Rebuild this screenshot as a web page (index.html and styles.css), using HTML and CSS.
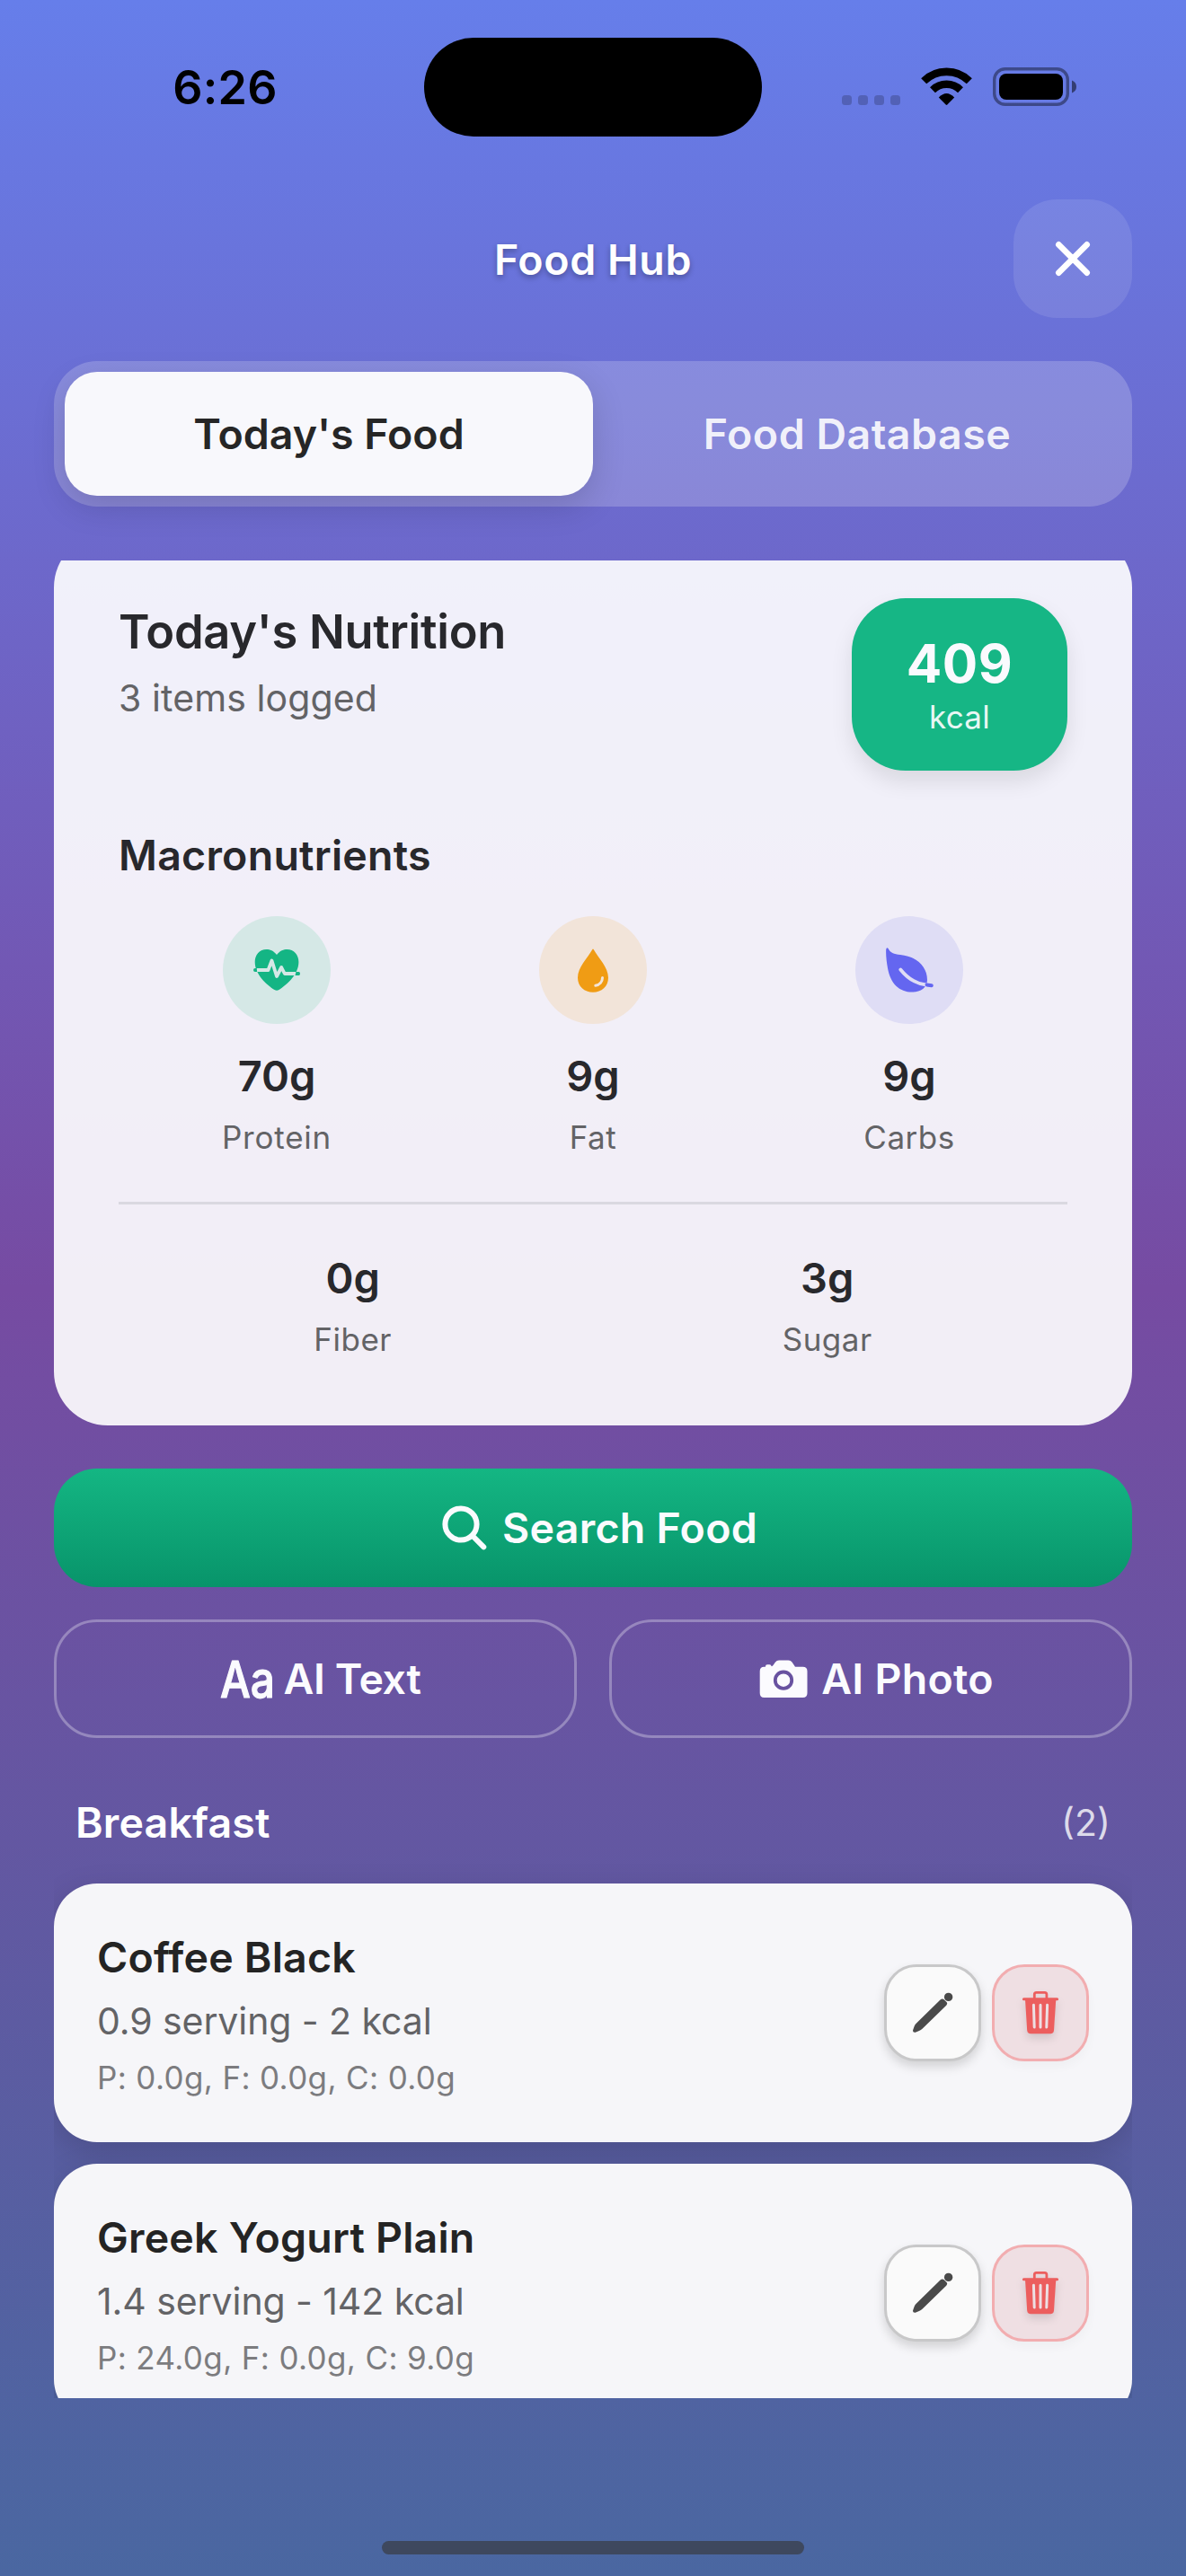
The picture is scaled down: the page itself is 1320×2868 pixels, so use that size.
FILE: index.html
```html
<!DOCTYPE html>
<html lang="en">
<head>
<meta charset="utf-8">
<title>Food Hub</title>
<link rel="stylesheet" href="styles.css">
</head>
<body>
<svg class="sprite" aria-hidden="true">
  <symbol id="pencil" viewBox="3 3 102 102">
    <path d="M62.500 39.500Q64.800 37.500 67 39.400L69.500 41.900Q71 43.700 69.200 45.700L42.500 71.700Q41 73.200 39 73.900L34.800 75.700Q31.600 76.200 32.100 73.200L33.600 69Q34.400 66.800 36 65.600Z" fill="#4a4a4a"/>
    <circle cx="71.600" cy="36.400" r="4.700" fill="#4a4a4a"/>
  </symbol>
  <symbol id="trash" viewBox="3 3 102 102">
    <path d="M47.300 38V33.500Q47.300 31.300 49.500 31.300H58.700Q60.900 31.300 60.900 33.500V38" fill="none" stroke="#ec5e5e" stroke-width="2.800"/>
    <path d="M35.400 38.700H72.600" stroke="#ec5e5e" stroke-width="3" stroke-linecap="round"/>
    <path d="M37 39H71.300L69 73.500Q68.700 77.300 65 77.300H43.200Q39.500 77.300 39.200 73.500Z" fill="#ec5e5e"/>
    <path d="M46.400 45.200L47.200 70M54 45.200V70M61.600 45.200L60.800 70" stroke="#eddfe3" stroke-width="3" stroke-linecap="round"/>
  </symbol>
</svg>
<div class="screen">
  <div class="status">
    <div class="time">6:26</div>
    <div class="island"></div>
    <div class="indicators">
      <div class="cell"><i></i><i></i><i></i><i></i></div>
      <svg class="wifi" viewBox="0 0 57 43" width="57" height="43">
        <path d="M3.2 15.3A36 36 0 0 1 53.8 15.3" fill="none" stroke="#000" stroke-width="8.6"/>
        <path d="M13 25.2A22 22 0 0 1 44 25.2" fill="none" stroke="#000" stroke-width="8.4"/>
        <path d="M19.8 33.5Q28.500 24.500 37.200 33.500L29.300 41.600Q28.500 42.300 27.700 41.600Z" fill="#000"/>
      </svg>
      <svg class="battery" viewBox="0 0 94 44" width="94" height="44">
        <rect x="1.700" y="1.700" width="81.600" height="39.600" rx="12" fill="none" stroke="#000" stroke-opacity=".4" stroke-width="3.400"/>
        <rect x="7" y="7" width="71" height="29" rx="8" fill="#000"/>
        <path d="M88 14.500Q93 16.500 93 21.500T88 28.500Z" fill="#000" fill-opacity=".5"/>
      </svg>
    </div>
  </div>

  <header class="header">
    <h1>Food Hub</h1>
    <button class="close" aria-label="Close">
      <svg viewBox="0 0 132 132" width="132" height="132"><path d="M50.300 50.300L81.700 81.700M81.700 50.300L50.300 81.700" stroke="#fff" stroke-width="6.600" stroke-linecap="round"/></svg>
    </button>
  </header>

  <nav class="tabs">
    <div class="tab active">Today's Food</div>
    <div class="tab">Food Database</div>
  </nav>

  <main class="scroll">
    <section class="nutrition">
      <div class="top">
        <div>
          <h2>Today's Nutrition</h2>
          <p>3 items logged</p>
        </div>
        <div class="badge"><b>409</b><span>kcal</span></div>
      </div>
      <h3>Macronutrients</h3>
      <div class="macros">
        <div class="macro">
          <svg class="disc protein" viewBox="0 0 120 120">
            <path d="M60 43C56.500 38.500 52.500 37 48.500 37C41 37 35.700 43 35.700 51C35.700 65 49 76.500 57.500 82Q60 83.400 62.500 82C71 76.500 84.400 65 84.400 51C84.400 43 79 37 71.500 37C67.500 37 63.500 38.500 60 43Z" fill="#14b584"/>
            <path d="M37.500 60H50.500L54.500 49.500L60 67L65.200 57L68.800 64H81.500" fill="none" stroke="#d5e8e6" stroke-width="3.800" stroke-linejoin="round"/>
            <path d="M34 60Q34 58 36 58H37.600L38.200 62H36Q34 62 34 60M86 64Q86 62 84.500 62H81.500L80.500 66H84.500Q86 66 86 64" fill="#14b584"/>
          </svg>
          <b>70g</b><span class="wide">Protein</span>
        </div>
        <div class="macro">
          <svg class="disc fat" viewBox="0 0 120 120">
            <path d="M59.200 37.200Q60 35.800 60.800 37.200C66 46.500 77 57 77 68.500C77 78.500 69.500 84.700 60 84.700C50.500 84.700 43 78.500 43 68.500C43 57 54 46.500 59.200 37.200Z" fill="#f09c14"/>
            <path d="M70.500 68.500C70.500 73 67.500 76.500 62.800 77.200" fill="none" stroke="#f2e4d9" stroke-width="3" stroke-linecap="round"/>
          </svg>
          <b>9g</b><span>Fat</span>
        </div>
        <div class="macro">
          <svg class="disc carbs" viewBox="0 0 120 120">
            <path d="M36.600 36C38.500 40.500 43 42.300 50 43C68 44.800 80 56 80 71C80 80 72 84.600 63 84.600C49 84.600 39 75 36 58C34.800 51 33.800 43 34.200 37Q34.800 34 36.600 36Z" fill="#6466f0"/>
            <path d="M50.300 59.500C57 68 67 75 78.300 76.300" fill="none" stroke="#dfddf5" stroke-width="3.800" stroke-linecap="round"/>
            <path d="M79.500 76.400L84.800 77.200" stroke="#6466f0" stroke-width="4" stroke-linecap="round"/>
          </svg>
          <b>9g</b><span>Carbs</span>
        </div>
      </div>
      <div class="minor">
        <div class="macro"><b>0g</b><span>Fiber</span></div>
        <div class="macro"><b>3g</b><span>Sugar</span></div>
      </div>
    </section>

    <button class="btn primary">
      <svg viewBox="0 0 68 68"><circle cx="36" cy="30" r="17.600" fill="none" stroke="#fbfbfe" stroke-width="6"/><path d="M49 43L61.300 55.300" stroke="#fbfbfe" stroke-width="6" stroke-linecap="round"/></svg>
      <span>Search Food</span>
    </button>
    <div class="pair">
      <button class="btn outline">
        <svg viewBox="0 0 68 68" class="aa"><text x="11" y="54.500" textLength="61" lengthAdjust="spacingAndGlyphs">Aa</text></svg>
        <span class="tight">AI Text</span>
      </button>
      <button class="btn outline">
        <svg viewBox="0 0 68 68">
          <path d="M18.500 20.800H20V20Q20 18.200 22 18.200H24.500Q26.500 18.200 26.500 20Q27.500 20.500 28.500 19L31 15.500Q32.500 13.500 35 13.500H45.500Q48 13.500 49.500 15.500L53 20.800H61.500Q66.500 20.800 66.500 25.800V50Q66.500 55 61.500 55H18.500Q13.700 55 13.700 50V25.800Q13.700 20.800 18.500 20.800Z" fill="#fbfbfe"/>
          <circle cx="40" cy="35.700" r="9.200" fill="none" stroke="#6852a0" stroke-width="3.800"/>
        </svg>
        <span>AI Photo</span>
      </button>
    </div>

    <div class="meal"><h3>Breakfast</h3><span>(2)</span></div>
    <div class="foods">
      <article class="food">
        <div class="info"><h4>Coffee Black</h4><p>0.9 serving - 2 kcal</p><small>P: 0.0g, F: 0.0g, C: 0.0g</small></div>
        <button class="act" aria-label="Edit"><svg><use href="#pencil"/></svg></button>
        <button class="act danger" aria-label="Delete"><svg><use href="#trash"/></svg></button>
      </article>
      <article class="food">
        <div class="info"><h4>Greek Yogurt Plain</h4><p>1.4 serving - 142 kcal</p><small>P: 24.0g, F: 0.0g, C: 9.0g</small></div>
        <button class="act" aria-label="Edit"><svg><use href="#pencil"/></svg></button>
        <button class="act danger" aria-label="Delete"><svg><use href="#trash"/></svg></button>
      </article>
    </div>
  </main>
  <div class="home"></div>
</div>
</body>
</html>
```
FILE: styles.css
```css
* { box-sizing: border-box; margin: 0; padding: 0; }
body { font-family: Inter, "Liberation Sans", sans-serif; }
h1, h2, h3, h4 { font-weight: 600; }
button { border: 0; background: none; font: inherit; color: inherit; }
svg { display: block; flex: none; }
.sprite { position: absolute; width: 0; height: 0; }

.screen {
  width: 1320px;
  height: 2868px;
  overflow: hidden;
  display: flex;
  flex-direction: column;
  background: linear-gradient(180deg, #667eea 0%, #764ba2 50%, #4a67a1 100%);
}

.status {
  height: 222px;
  padding-top: 42px;
  display: grid;
  grid-template-columns: 472px 376px 472px;
  grid-template-rows: 110px;
}
.time {
  padding: 0 0 0 29px;
  text-align: center;
  font-size: 52px;
  line-height: 112px;
  font-weight: 600;
  letter-spacing: .3px;
}
.island { background: #000; border-radius: 55px; }
.indicators { display: flex; padding: 33px 0 0 89px; }
.cell { display: flex; gap: 7px; padding-top: 31px; margin-right: 23px; }
.cell i { width: 11px; height: 11px; border-radius: 3.5px; background: rgba(0, 0, 0, .2); }
.wifi { margin-right: 23px; }

.header {
  height: 132px;
  margin: 0 60px;
  display: grid;
  grid-template-columns: 132px 1fr 132px;
}
.header h1 {
  grid-column: 2;
  text-align: center;
  font-size: 46.5px;
  line-height: 134px;
  letter-spacing: .6px;
  color: #fff;
  text-shadow: 0 3px 6px rgba(0, 0, 0, .3);
}
.close { width: 132px; height: 132px; border-radius: 48px; background: rgba(255, 255, 255, .1); }

.tabs {
  margin: 48px 60px 0;
  height: 162px;
  padding: 12px;
  display: grid;
  grid-template-columns: 1fr 1fr;
  border-radius: 48px;
  background: rgba(255, 255, 255, .2);
}
.tab {
  text-align: center;
  font-size: 46.5px;
  line-height: 138px;
  font-weight: 600;
  letter-spacing: .5px;
  color: rgba(255, 255, 255, .9);
}
.tab.active {
  letter-spacing: 0;
  color: #262626;
  background: #f8f8fc;
  border-radius: 36px;
  box-shadow: 0 12px 36px rgba(0, 0, 0, .15);
}

.scroll { height: 2046px; margin: 60px 60px 0; overflow: hidden; }

.nutrition {
  height: 993px;
  margin-top: -30px;
  padding: 72px;
  border-radius: 60px;
  background: rgba(255, 255, 255, .905);
  color: #28282c;
}
.top { display: flex; justify-content: space-between; height: 192px; }
.top h2 { padding-top: 4px; font-size: 52.4px; line-height: 66px; letter-spacing: -.25px; }
.top p { margin-top: 16px; font-size: 41px; line-height: 50px; letter-spacing: .1px; color: #636366; }
.badge {
  width: 240px;
  border-radius: 60px;
  padding-top: 38px;
  display: flex;
  flex-direction: column;
  align-items: center;
  background: #16b685;
  color: #fafafe;
  box-shadow: 0 12px 24px rgba(0, 0, 0, .1);
}
.badge b { font-size: 58.5px; line-height: 70px; letter-spacing: .5px; }
.badge span { margin-top: 2px; font-size: 35px; line-height: 44px; letter-spacing: .3px; color: #e8f7f4; }
.nutrition h3 { margin-top: 65px; font-size: 46.5px; line-height: 58px; letter-spacing: .25px; }
.macros {
  margin-top: 39px;
  display: grid;
  grid-template-columns: repeat(3, 1fr);
  padding-bottom: 50px;
  border-bottom: 3px solid #dad8e0;
}
.macro { display: flex; flex-direction: column; align-items: center; }
.macro b { font-size: 47px; line-height: 58px; font-weight: 600; }
.macro span { margin-top: 17px; font-size: 35px; line-height: 44px; letter-spacing: .5px; color: #636366; }
.macro .wide { letter-spacing: .8px; }
.disc { width: 120px; height: 120px; border-radius: 50%; margin-bottom: 29px; }
.protein { background: #d5e8e6; }
.fat { background: #f2e4d9; }
.carbs { background: #dfddf5; }
.minor { margin-top: 53px; display: flex; justify-content: space-around; }

.btn {
  height: 132px;
  display: flex;
  align-items: center;
  justify-content: center;
  gap: 14px;
  border-radius: 48px;
  font-size: 46.5px;
  line-height: 58px;
  font-weight: 600;
  letter-spacing: .27px;
  color: #fbfbfe;
}
.btn svg { width: 68px; height: 68px; overflow: visible; }
.btn .tight { letter-spacing: -.4px; }
.primary { width: 100%; margin-top: 48px; background: linear-gradient(180deg, #14b683, #08946a); }
.outline { border: 3px solid rgba(255, 255, 255, .3); }
.pair { margin-top: 36px; display: grid; grid-template-columns: 1fr 1fr; gap: 36px; }
.aa text {
  font-size: 56px;
  font-weight: 500;
  fill: #fbfbfe;
  stroke: #fbfbfe;
  stroke-width: 1.2px;
  stroke-linejoin: round;
  letter-spacing: 0;
}

.meal {
  margin: 65px 24px 0;
  display: flex;
  justify-content: space-between;
  color: #fff;
}
.meal h3 { font-size: 46.5px; line-height: 58px; letter-spacing: .16px; }
.meal span { font-size: 41px; line-height: 58px; color: rgba(255, 255, 255, .8); }

.foods { margin-top: 39px; display: flex; flex-direction: column; gap: 24px; }
.food {
  height: 288px;
  padding: 0 48px;
  display: flex;
  align-items: center;
  gap: 12px;
  border-radius: 48px;
  background: #f6f6f9;
  box-shadow: 0 12px 36px rgba(0, 0, 0, .15);
}
.info { flex: 1; padding-top: 3px; }
.info h4 { font-size: 46.5px; line-height: 58px; letter-spacing: .2px; color: #242424; }
.info p { margin-top: 17px; font-size: 41px; line-height: 50px; letter-spacing: -.08px; color: #636366; }
.info small { display: block; margin-top: 16px; font-size: 35px; line-height: 44px; letter-spacing: .36px; color: #7c7c7f; }
.act {
  width: 108px;
  height: 108px;
  border-radius: 36px;
  border: 3px solid #c8c8c9;
  background: #fafafa;
  box-shadow: 0 6px 12px rgba(0, 0, 0, .15);
}
.act svg { width: 102px; height: 102px; }
.danger { border-color: #f2adb0; background: #efdfe3; box-shadow: 0 6px 12px rgba(0, 0, 0, .03); }
.danger svg { filter: drop-shadow(0 5px 5px rgba(0, 0, 0, .12)); }

.home {
  width: 470px;
  height: 15px;
  margin: 159px auto 0;
  border-radius: 7.5px;
  background: #3e485e;
}
```
